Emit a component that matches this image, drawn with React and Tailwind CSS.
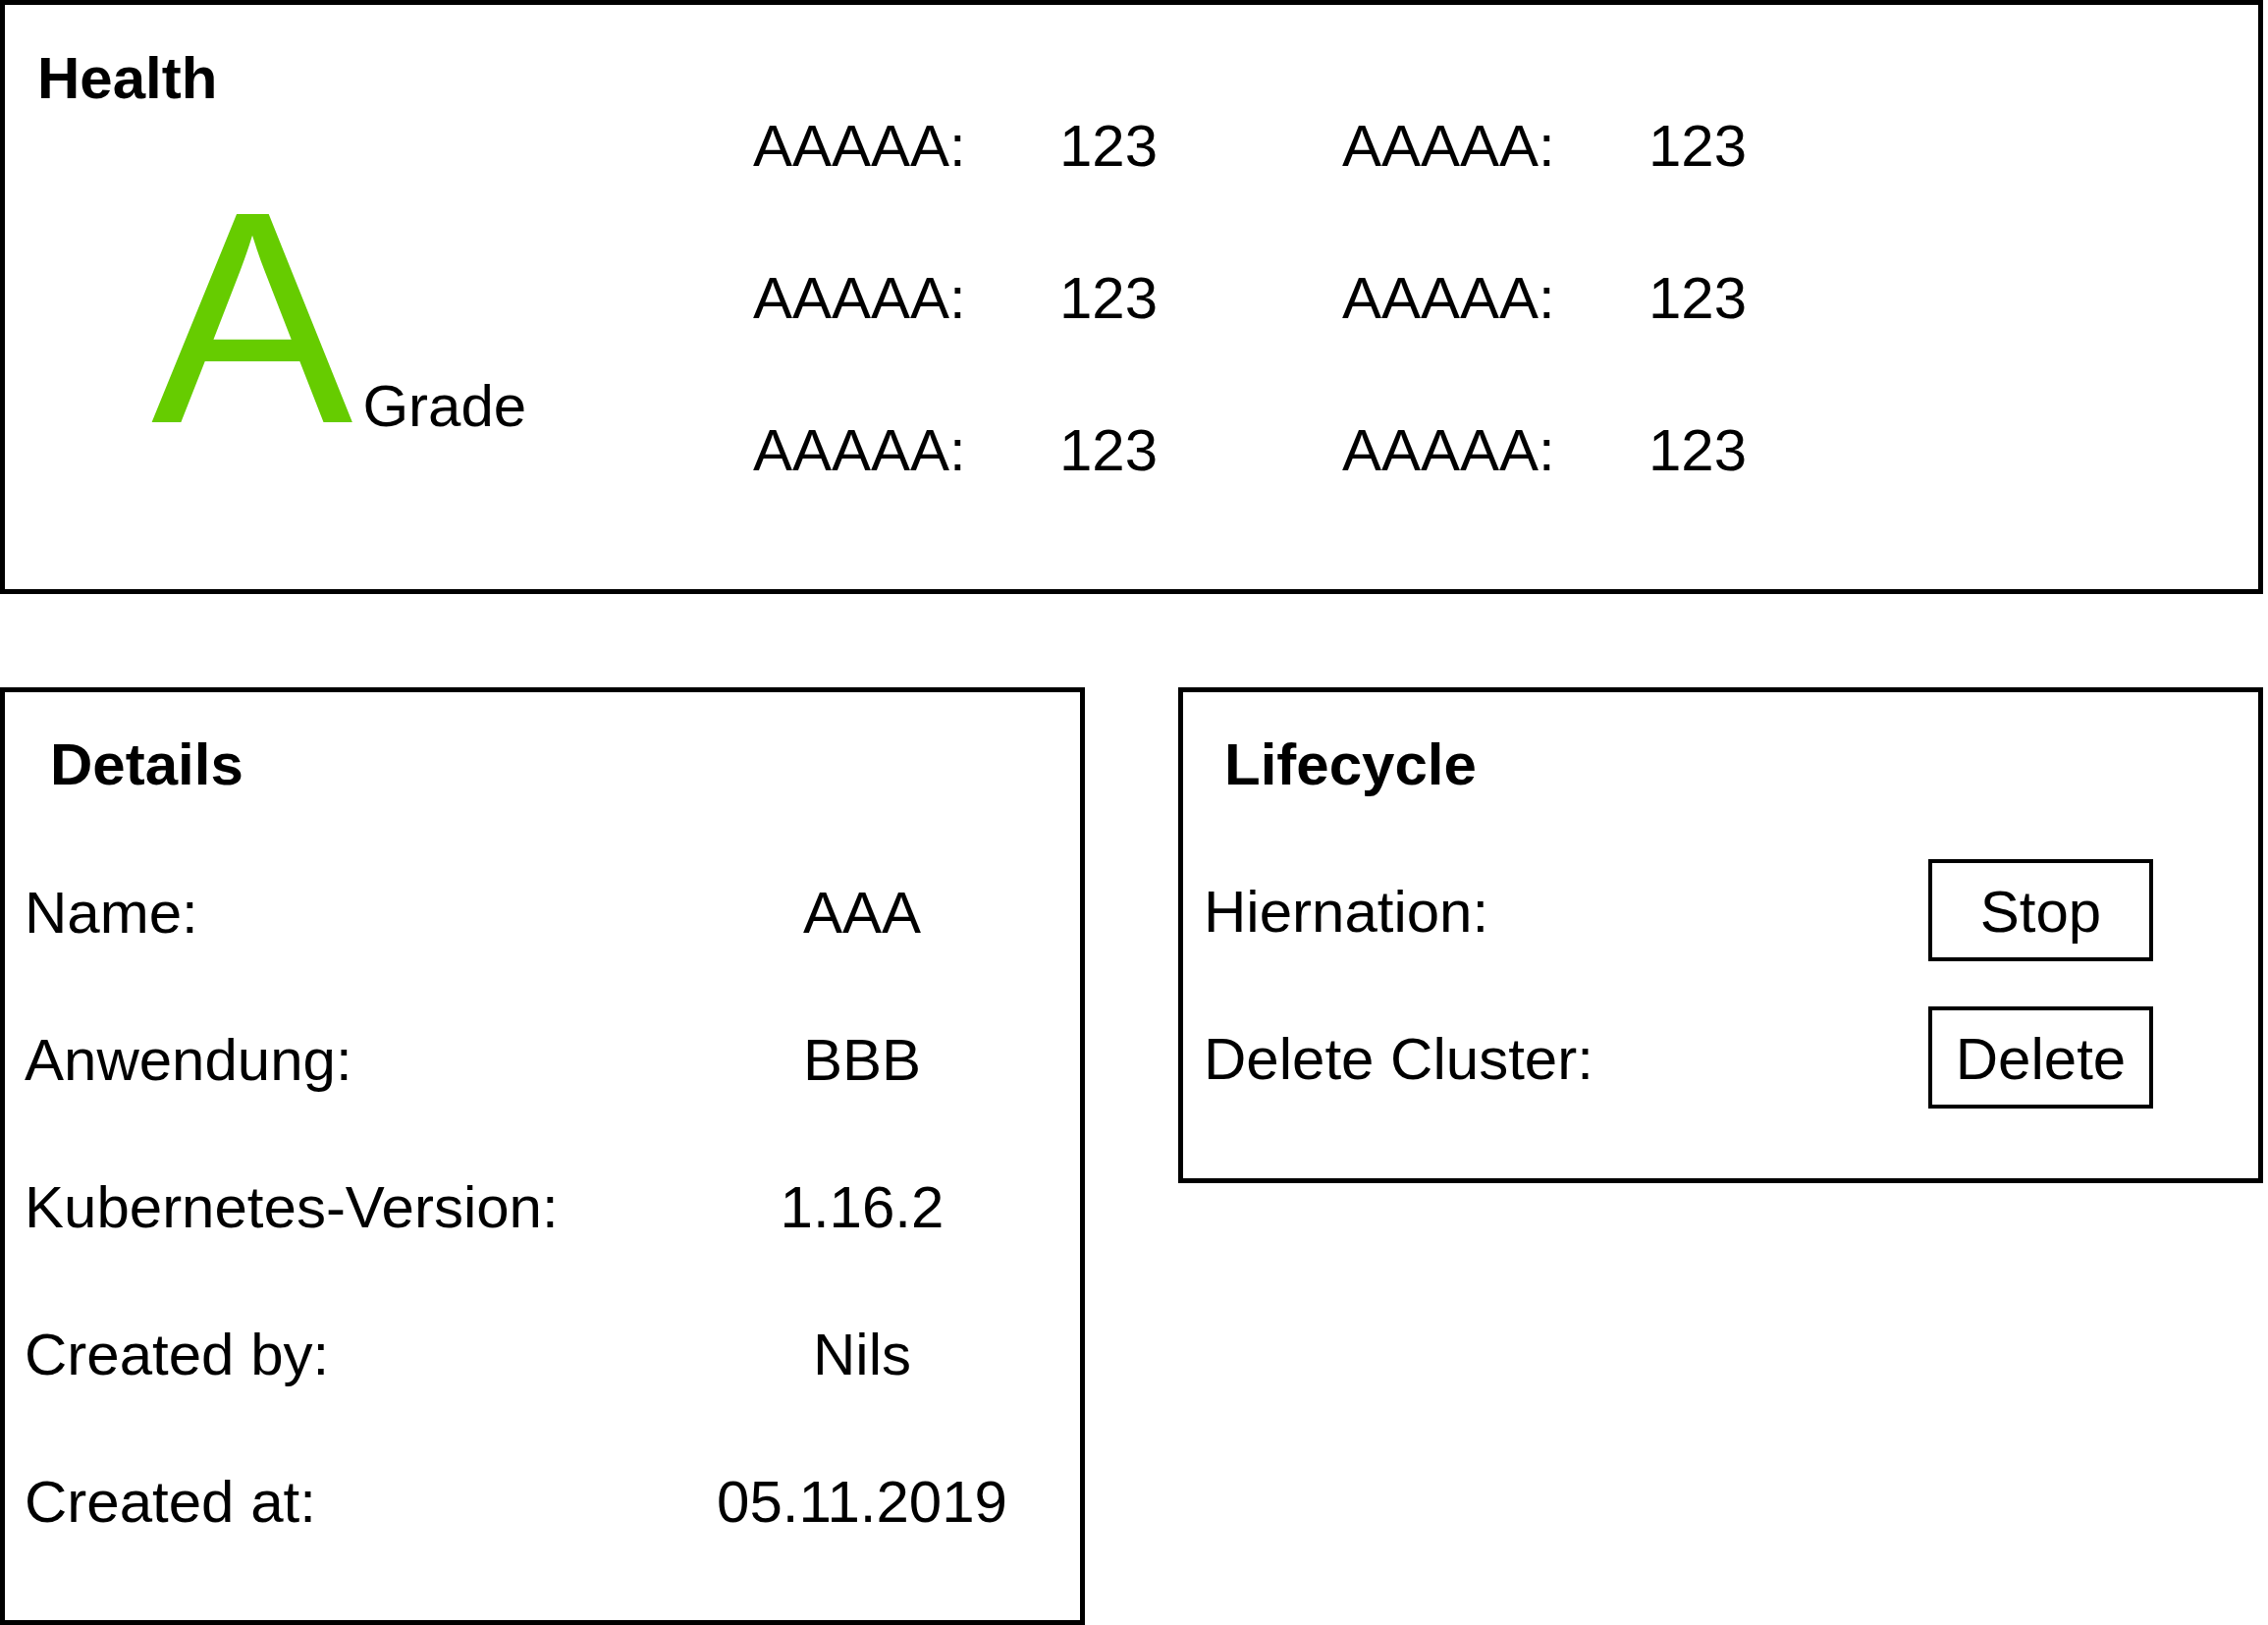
export default function App() {
  const metrics = [0, 1, 2];
  const details = [
    ["Name:", "AAA"],
    ["Anwendung:", "BBB"],
    ["Kubernetes-Version:", "1.16.2"],
    ["Created by:", "Nils"],
    ["Created at:", "05.11.2019"],
  ];
  return (
    <div className="w-[2310px] h-[1655px] bg-white text-black text-[60px] leading-[60px] font-['Liberation_Sans',Arial,sans-serif]">
      <section className="w-[2305px] h-[605px] border-[5px] border-black">
        <h2 className="pl-[33px] pt-[45px] font-bold">Health</h2>
        <div className="flex items-start">
          <div className="w-[762px] pl-[149px] mt-[63px] flex items-start">
            <span className="text-[308px] leading-[300px] text-[#66cc00]">A</span>
            <span className="ml-[10px] mt-[211px]">Grade</span>
          </div>
          <div className="mt-[9px] grid grid-cols-[312px_288px_312px_auto] gap-y-[95px]">
            {metrics.map((i) => (
              <div key={i} className="contents">
                <span>AAAAA:</span>
                <span>123</span>
                <span>AAAAA:</span>
                <span>123</span>
              </div>
            ))}
          </div>
        </div>
      </section>

      <div className="flex items-start mt-[95px]">
        <section className="w-[1105px] h-[955px] border-[5px] border-black">
          <h2 className="pl-[46px] pt-[44px] font-bold">Details</h2>
          <div className="mt-[91px] pl-[20px] grid grid-cols-[703px_300px] gap-y-[90px]">
            {details.map(([label, value]) => (
              <div key={label} className="contents">
                <span>{label}</span>
                <span className="text-center">{value}</span>
              </div>
            ))}
          </div>
        </section>

        <section className="ml-[95px] w-[1105px] h-[505px] border-[5px] border-black">
          <h2 className="pl-[42px] pt-[44px] font-bold">Lifecycle</h2>
          <div className="mt-[66px] pl-[21px] pr-[107px] flex flex-col gap-[46px]">
            <div className="flex items-center justify-between">
              <span className="pt-[4px]">Hiernation:</span>
              <button className="w-[229px] h-[104px] pt-[4px] border-[4px] border-black flex items-center justify-center">
                Stop
              </button>
            </div>
            <div className="flex items-center justify-between">
              <span className="pt-[4px]">Delete Cluster:</span>
              <button className="w-[229px] h-[104px] pt-[4px] border-[4px] border-black flex items-center justify-center">
                Delete
              </button>
            </div>
          </div>
        </section>
      </div>
    </div>
  );
}
